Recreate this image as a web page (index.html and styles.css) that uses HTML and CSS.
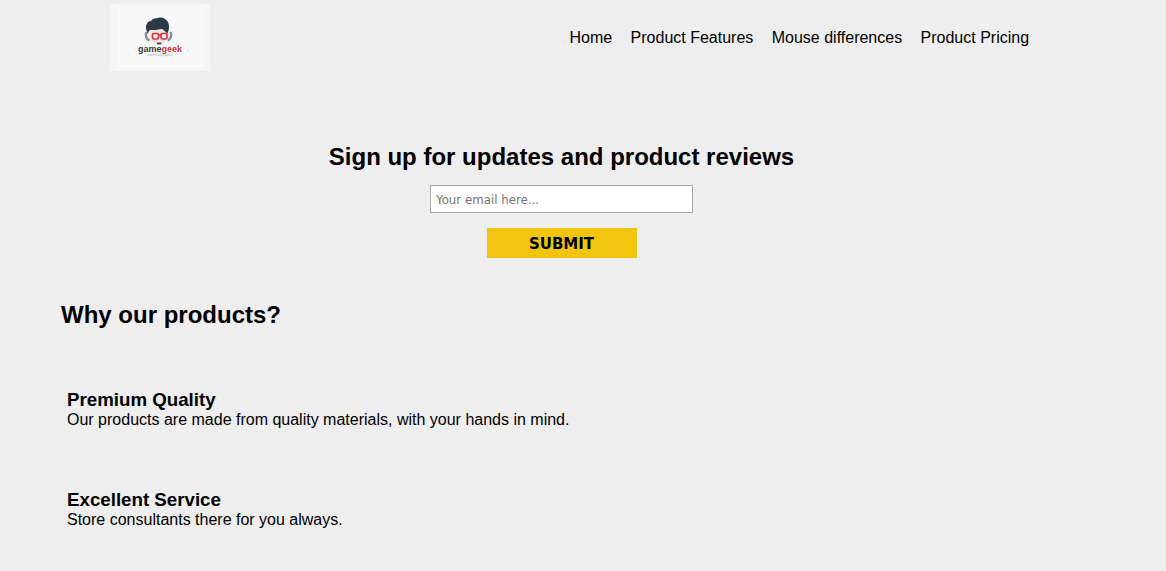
FILE: index.html
```html
<!DOCTYPE html>
<html><head><title>Game Geek</title>
<link rel="stylesheet" href="styles.css">
</head>
<body>
<div id="header">
  <div class="logo">
    <svg width="100" height="67" viewBox="0 0 100 67">
      <rect width="100" height="67" fill="#f5f5f6"/>
      <rect x="8" y="3" width="86" height="61" fill="#f9f9fa"/>
      <!-- headset -->
      <path d="M36.5 28c-1.500 3-.5 7 3 8.500" fill="none" stroke="#858d92" stroke-width="2.500"/>
      <path d="M60.500 28c1.500 3 .5 7-3 8.500" fill="none" stroke="#858d92" stroke-width="2.500"/>
      <!-- face -->
      <path d="M40 26h18v8c0 4-4 6-9 6s-9-2-9-6z" fill="#f1e4dc"/>
      <!-- hair -->
      <path d="M38 30c-2-4-3-8-1-10 0-2 2-3 4-3 1-2 4-3 7-3 3-1 7 0 8 2 2 1 3 4 3 7 0 3-1 5-2 7-1-2-3-4-5-5-4 1-8 1-12 1-1 1-2 2-2 4z" fill="#2b3a46"/>
      <!-- glasses -->
      <rect x="42.500" y="29.500" width="6" height="5.500" rx="1.500" fill="#fbeeee" stroke="#d5333c" stroke-width="1.700"/>
      <rect x="51" y="29.500" width="6" height="5.500" rx="1.500" fill="#fbeeee" stroke="#d5333c" stroke-width="1.700"/>
      <path d="M48 31h4" stroke="#d5333c" stroke-width="1.400"/>
      <rect x="47" y="38.500" width="4.500" height="2" fill="#46525a"/>
      <text x="28" y="48" class="logo-text">game<tspan class="logo-red">geek</tspan></text>
      <text x="50" y="52" class="logo-small">professional gamer</text>
    </svg>
  </div>
  <div id="nav">
    <a href="#">Home</a>
    <a href="#">Product Features</a>
    <a href="#">Mouse differences</a>
    <a href="#">Product Pricing</a>
  </div>
</div>
<div id="signup">
  <h2>Sign up for updates and product reviews</h2>
  <input type="email" id="email" placeholder="Your email here...">
  <button id="submit">SUBMIT</button>
</div>
<div id="why">
  <h2>Why our products?</h2>
  <div class="feature">
    <h3>Premium Quality</h3>
    <p>Our products are made from quality materials, with your hands in mind.</p>
  </div>
  <div class="feature">
    <h3>Excellent Service</h3>
    <p>Store consultants there for you always.</p>
  </div>
</div>
</body>
</html>
```

FILE: styles.css
```css
html, body {
    overflow: hidden;
}
body {
    margin: 0;
    height: 571px;
    background: #eee;
    color: #000;
    font-family: "Liberation Sans", Arial, sans-serif;
    font-size: 16px;
}

#header {
    display: flex;
    align-items: flex-start;
    height: 71px;
    padding: 4px 0 0 110px;
    box-sizing: border-box;
}
.logo {
    width: 100px;
    height: 67px;
}
.logo svg {
    display: block;
}
.logo-text {
    font-family: "Liberation Sans", Arial, sans-serif;
    font-size: 9px;
    font-weight: bold;
    fill: #3a3a3a;
}
.logo-red {
    fill: #d5333c;
}
.logo-small {
    font-family: "Liberation Sans", Arial, sans-serif;
    font-size: 3px;
    fill: #aaa;
    text-anchor: middle;
}

#nav {
    display: flex;
    gap: 18.4px;
    margin-left: 359.5px;
    padding-top: 24px;
}
#nav a {
    color: #000;
    text-decoration: none;
    line-height: 19px;
}

#signup {
    display: flex;
    flex-direction: column;
    align-items: center;
    width: 1123px;
    padding-top: 72px;
}
#signup h2 {
    margin: 0;
    font-size: 24px;
    line-height: 28px;
}
#email {
    width: 263px;
    height: 28px;
    margin-top: 14px;
    padding: 1px 4px 0 5px;
    box-sizing: border-box;
    border: 1px solid #a9a9a9;
    background: #fff;
    font-family: "DejaVu Sans", Verdana, sans-serif;
    font-size: 11.8px;
}
#email::placeholder {
    color: #757575;
}
#submit {
    width: 150px;
    height: 30px;
    margin-top: 15px;
    border: 0;
    padding: 2px 0 0;
    background: #f1c40f;
    color: #000;
    font-family: "DejaVu Sans", Verdana, sans-serif;
    font-size: 15px;
    font-weight: bold;
}

#why {
    padding-left: 61px;
}
#why h2 {
    margin: 43px 0 0;
    font-size: 24px;
    line-height: 28px;
}
.feature {
    margin-left: 6px;
    height: 100px;
}
.feature:first-of-type {
    margin-top: 59px;
}
.feature h3 {
    margin: 0;
    font-size: 18.72px;
    line-height: 23px;
}
.feature p {
    margin: 0;
    line-height: 18px;
}
```
